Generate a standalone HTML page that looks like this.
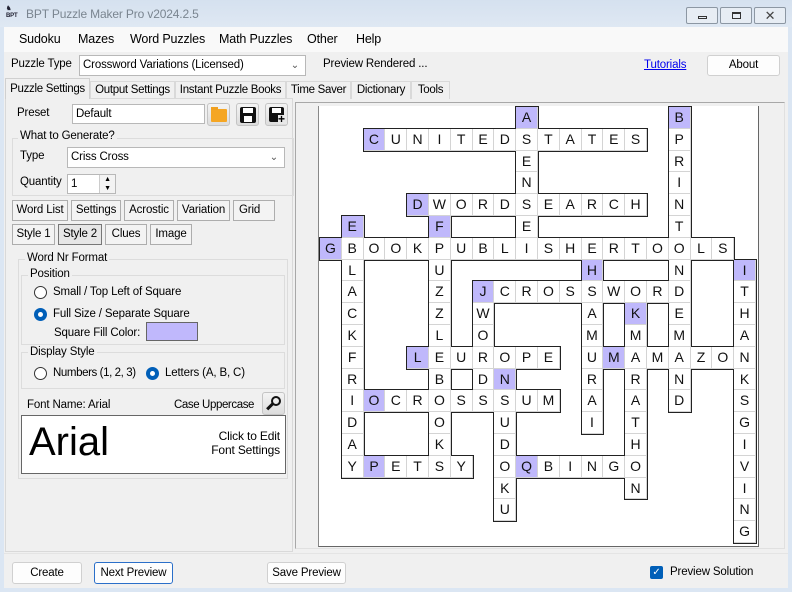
<!DOCTYPE html>
<html><head><meta charset="utf-8">
<style>
*{box-sizing:border-box;margin:0;padding:0}
body{width:792px;height:592px;overflow:hidden;background:#dbe6f3;font-family:"Liberation Sans",Arial,sans-serif;font-size:11.5px;letter-spacing:-0.15px;color:#000;position:relative}
.a{position:absolute;white-space:nowrap}
.win{position:absolute;left:4px;top:27px;width:784px;height:561px;background:#f0f0f0}
.menu{position:absolute;left:4px;top:27px;width:784px;height:25px;background:#f9f9f9}
.btn{position:absolute;background:#fdfdfd;border:1px solid #d0d0d0;border-radius:3px;text-align:center}
.wb{position:absolute;background:#f3f3f3;border:1px solid #adadad;text-align:center;line-height:19px}
.tab{position:absolute;top:81px;height:18px;border:1px solid #d9d9d9;border-bottom:none;background:#f0f0f0;line-height:17px;text-align:center;overflow:hidden;white-space:nowrap;letter-spacing:-0.3px}
.grp{position:absolute;border:1px solid #dcdcdc}
.gl{position:absolute;background:#f0f0f0;padding:0 2px;white-space:nowrap}
.radio{position:absolute;width:13px;height:13px;border-radius:50%;border:1px solid #333;background:#fff}
.radio.on{border-color:#005fb8;background:#005fb8}
.radio.on::after{content:'';position:absolute;left:3px;top:3px;width:5px;height:5px;border-radius:50%;background:#fff}
.inp{position:absolute;background:#fff;border:1px solid #b8b8b8;padding-left:3px;white-space:nowrap}
#g{position:absolute;left:0;top:0;z-index:0}
.c{position:absolute;left:calc(320px + var(--c)*21.8px);top:calc(107px + var(--r)*21.8px);width:21.8px;height:21.8px;background:#fff;border-right:1px solid #d4d4d4;border-bottom:1px solid #d4d4d4;font:14px "Liberation Sans",Arial,sans-serif;line-height:21px;text-align:center;color:#111;letter-spacing:0}
.c::before{content:'';position:absolute;left:-1px;top:-1px;right:-2px;bottom:-2px;background:#222;z-index:-1}
.h{background:#bfb8fb}
.ic{position:absolute;width:23px;height:23px;border:1px solid #c4c4c4;border-radius:3px;background:linear-gradient(#f4f4f4,#dcdcdc)}
</style></head><body>
<div class="a" style="left:0;top:0;width:792px;height:27px;background:linear-gradient(#d5e1ef,#dfe8f3)"></div>
<div class="a" style="left:6px;top:6px;width:14px;height:14px;font-size:6px;font-weight:bold;line-height:7px;color:#223">&#9822;<br>BPT</div>
<div class="a" style="left:26px;top:7px;font-size:12px;color:#7a8590">BPT Puzzle Maker Pro v2024.2.5</div>
<div class="a" style="left:686px;top:7px;width:32px;height:17px;border:1px solid #8c97a3;border-radius:2px;background:#e7edf4"><div style="position:absolute;left:11px;top:8px;width:9px;height:3px;border:1px solid #333"></div></div>
<div class="a" style="left:720px;top:7px;width:32px;height:17px;border:1px solid #8c97a3;border-radius:2px;background:#e7edf4"><div style="position:absolute;left:11px;top:4px;width:9px;height:7px;border:1px solid #333;border-top-width:2px"></div></div>
<div class="a" style="left:754px;top:7px;width:32px;height:17px;border:1px solid #8c97a3;border-radius:2px;background:#e7edf4;text-align:center;font-size:13px;line-height:15px;color:#444">&#x2715;</div>
<div class="win"></div>
<div class="menu"></div>
<div class="a" style="left:19px;top:32px;font-size:12.5px">Sudoku</div>
<div class="a" style="left:78px;top:32px;font-size:12.5px">Mazes</div>
<div class="a" style="left:130px;top:32px;font-size:12.5px">Word Puzzles</div>
<div class="a" style="left:219px;top:32px;font-size:12.5px">Math Puzzles</div>
<div class="a" style="left:307px;top:32px;font-size:12.5px">Other</div>
<div class="a" style="left:356px;top:32px;font-size:12.5px">Help</div>
<div class="a" style="left:11px;top:58px">Puzzle Type</div>
<div class="inp" style="left:79px;top:55px;width:227px;height:21px;line-height:19px">Crossword Variations (Licensed)<span style="position:absolute;right:6px;top:0;color:#555;font-size:10px">&#8964;</span></div>
<div class="a" style="left:323px;top:58px">Preview Rendered ...</div>
<div class="a" style="left:644px;top:59px;color:#0000ee;text-decoration:underline">Tutorials</div>
<div class="btn" style="left:707px;top:55px;width:73px;height:21px;line-height:19px">About</div>
<div class="tab" style="left:90px;width:85px">Output Settings</div>
<div class="tab" style="left:175px;width:111px">Instant Puzzle Books</div>
<div class="tab" style="left:286px;width:65px">Time Saver</div>
<div class="tab" style="left:351px;width:60px">Dictionary</div>
<div class="tab" style="left:411px;width:39px">Tools</div>
<div class="a" style="left:5px;top:98px;width:288px;height:454px;border:1px solid #d9d9d9;background:#f0f0f0"></div>
<div class="tab" style="left:5px;top:78px;width:85px;height:21px;background:#f0f0f0;border-color:#d0d0d0;line-height:20px">Puzzle Settings</div>
<div class="a" style="left:17px;top:107px">Preset</div>
<div class="inp" style="left:72px;top:104px;width:133px;height:20px;line-height:18px">Default</div>
<div class="ic" style="left:207px;top:103px"><div style="position:absolute;left:3px;top:5px;width:16px;height:13px;background:#f5a623;border-radius:1px"></div><div style="position:absolute;left:3px;top:3px;width:7px;height:3px;background:#f0a020"></div></div>
<div class="ic" style="left:236px;top:103px"><div style="position:absolute;left:3px;top:3px;width:16px;height:16px;background:#111;border-radius:2px"></div><div style="position:absolute;left:6px;top:4px;width:10px;height:5px;background:#fff"></div><div style="position:absolute;left:7px;top:12px;width:8px;height:6px;background:#fff"></div></div>
<div class="ic" style="left:265px;top:103px"><div style="position:absolute;left:3px;top:3px;width:15px;height:15px;background:#111;border-radius:2px"></div><div style="position:absolute;left:6px;top:4px;width:9px;height:5px;background:#fff"></div><div style="position:absolute;left:12px;top:11px;width:9px;height:9px;background:#e8e8e8"></div><div class="a" style="left:12px;top:8px;font-size:12px;font-weight:bold">+</div></div>
<div class="grp" style="left:12px;top:138px;width:282px;height:58px"></div>
<div class="gl" style="left:18px;top:130px">What to Generate?</div>
<div class="a" style="left:20px;top:150px">Type</div>
<div class="inp" style="left:67px;top:147px;width:218px;height:21px;line-height:19px">Criss Cross<span style="position:absolute;right:6px;top:0;color:#555;font-size:10px">&#8964;</span></div>
<div class="a" style="left:20px;top:176px">Quantity</div>
<div class="inp" style="left:67px;top:174px;width:49px;height:20px;line-height:18px">1<div style="position:absolute;right:0;top:0;width:16px;height:18px;border-left:1px solid #ccc;font-size:7px;line-height:9px;text-align:center;background:#f3f3f3">&#9650;<br>&#9660;</div></div>
<div class="wb" style="left:12px;top:200px;width:56px;height:21px">Word List</div>
<div class="wb" style="left:71px;top:200px;width:50px;height:21px">Settings</div>
<div class="wb" style="left:124px;top:200px;width:50px;height:21px">Acrostic</div>
<div class="wb" style="left:177px;top:200px;width:53px;height:21px">Variation</div>
<div class="wb" style="left:233px;top:200px;width:42px;height:21px;text-align:left;padding-left:5px">Grid</div>
<div class="wb" style="left:12px;top:224px;width:43px;height:21px">Style 1</div>
<div class="wb" style="left:58px;top:224px;width:44px;height:21px;background:#e6e6e6;border-color:#777">Style 2</div>
<div class="wb" style="left:105px;top:224px;width:42px;height:21px">Clues</div>
<div class="wb" style="left:150px;top:224px;width:42px;height:21px">Image</div>
<div class="grp" style="left:18px;top:259px;width:270px;height:220px"></div>
<div class="gl" style="left:25px;top:252px">Word Nr Format</div>
<div class="grp" style="left:21px;top:275px;width:264px;height:70px"></div>
<div class="gl" style="left:28px;top:268px">Position</div>
<div class="radio" style="left:34px;top:286px"></div>
<div class="a" style="left:53px;top:286px">Small / Top Left of Square</div>
<div class="radio on" style="left:34px;top:308px"></div>
<div class="a" style="left:53px;top:308px">Full Size / Separate Square</div>
<div class="a" style="left:54px;top:327px">Square Fill Color:</div>
<div class="a" style="left:146px;top:322px;width:52px;height:19px;background:#c0b8fc;border:1px solid #666"></div>
<div class="grp" style="left:21px;top:352px;width:264px;height:37px"></div>
<div class="gl" style="left:28px;top:346px">Display Style</div>
<div class="radio" style="left:34px;top:367px"></div>
<div class="a" style="left:53px;top:367px;letter-spacing:-0.4px">Numbers (1, 2, 3)</div>
<div class="radio on" style="left:146px;top:367px"></div>
<div class="a" style="left:165px;top:367px">Letters (A, B, C)</div>
<div class="a" style="left:27px;top:399px">Font Name: Arial</div>
<div class="a" style="left:174px;top:399px;letter-spacing:-0.4px">Case Uppercase</div>
<div class="ic" style="left:262px;top:392px;width:23px;height:23px"><div style="position:absolute;left:8px;top:3px;width:10px;height:10px;border:2px solid #111;border-radius:50%"></div><div style="position:absolute;left:3px;top:12px;width:8px;height:3px;background:#111;transform:rotate(-45deg)"></div></div>
<div class="a" style="left:21px;top:415px;width:265px;height:59px;background:#fff;border:1px solid #666"></div>
<div class="a" style="left:29px;top:417px;font-size:40px;line-height:50px;letter-spacing:0">Arial</div>
<div class="a" style="right:512px;top:429px;font-size:12px;text-align:right;line-height:14px">Click to Edit<br>Font Settings</div>
<div class="a" style="left:295px;top:102px;width:490px;height:447px;background:#f0f0f0;border:1px solid #a8a8a8;border-right-color:#e0e0e0;border-bottom-color:#e0e0e0"></div>
<div class="a" style="left:318px;top:106px;width:441px;height:441px;background:#fff;border:1px solid #666;border-top:none;border-left:1px solid #888"></div>
<div id="g">
<div class="c h" style="--c:9;--r:0">A</div><div class="c h" style="--c:16;--r:0">B</div>
<div class="c h" style="--c:2;--r:1">C</div><div class="c" style="--c:3;--r:1">U</div><div class="c" style="--c:4;--r:1">N</div><div class="c" style="--c:5;--r:1">I</div><div class="c" style="--c:6;--r:1">T</div><div class="c" style="--c:7;--r:1">E</div><div class="c" style="--c:8;--r:1">D</div><div class="c" style="--c:9;--r:1">S</div><div class="c" style="--c:10;--r:1">T</div><div class="c" style="--c:11;--r:1">A</div><div class="c" style="--c:12;--r:1">T</div><div class="c" style="--c:13;--r:1">E</div><div class="c" style="--c:14;--r:1">S</div><div class="c" style="--c:16;--r:1">P</div>
<div class="c" style="--c:9;--r:2">E</div><div class="c" style="--c:16;--r:2">R</div>
<div class="c" style="--c:9;--r:3">N</div><div class="c" style="--c:16;--r:3">I</div>
<div class="c h" style="--c:4;--r:4">D</div><div class="c" style="--c:5;--r:4">W</div><div class="c" style="--c:6;--r:4">O</div><div class="c" style="--c:7;--r:4">R</div><div class="c" style="--c:8;--r:4">D</div><div class="c" style="--c:9;--r:4">S</div><div class="c" style="--c:10;--r:4">E</div><div class="c" style="--c:11;--r:4">A</div><div class="c" style="--c:12;--r:4">R</div><div class="c" style="--c:13;--r:4">C</div><div class="c" style="--c:14;--r:4">H</div><div class="c" style="--c:16;--r:4">N</div>
<div class="c h" style="--c:1;--r:5">E</div><div class="c h" style="--c:5;--r:5">F</div><div class="c" style="--c:9;--r:5">E</div><div class="c" style="--c:16;--r:5">T</div>
<div class="c h" style="--c:0;--r:6">G</div><div class="c" style="--c:1;--r:6">B</div><div class="c" style="--c:2;--r:6">O</div><div class="c" style="--c:3;--r:6">O</div><div class="c" style="--c:4;--r:6">K</div><div class="c" style="--c:5;--r:6">P</div><div class="c" style="--c:6;--r:6">U</div><div class="c" style="--c:7;--r:6">B</div><div class="c" style="--c:8;--r:6">L</div><div class="c" style="--c:9;--r:6">I</div><div class="c" style="--c:10;--r:6">S</div><div class="c" style="--c:11;--r:6">H</div><div class="c" style="--c:12;--r:6">E</div><div class="c" style="--c:13;--r:6">R</div><div class="c" style="--c:14;--r:6">T</div><div class="c" style="--c:15;--r:6">O</div><div class="c" style="--c:16;--r:6">O</div><div class="c" style="--c:17;--r:6">L</div><div class="c" style="--c:18;--r:6">S</div>
<div class="c" style="--c:1;--r:7">L</div><div class="c" style="--c:5;--r:7">U</div><div class="c h" style="--c:12;--r:7">H</div><div class="c" style="--c:16;--r:7">N</div><div class="c h" style="--c:19;--r:7">I</div>
<div class="c" style="--c:1;--r:8">A</div><div class="c" style="--c:5;--r:8">Z</div><div class="c h" style="--c:7;--r:8">J</div><div class="c" style="--c:8;--r:8">C</div><div class="c" style="--c:9;--r:8">R</div><div class="c" style="--c:10;--r:8">O</div><div class="c" style="--c:11;--r:8">S</div><div class="c" style="--c:12;--r:8">S</div><div class="c" style="--c:13;--r:8">W</div><div class="c" style="--c:14;--r:8">O</div><div class="c" style="--c:15;--r:8">R</div><div class="c" style="--c:16;--r:8">D</div><div class="c" style="--c:19;--r:8">T</div>
<div class="c" style="--c:1;--r:9">C</div><div class="c" style="--c:5;--r:9">Z</div><div class="c" style="--c:7;--r:9">W</div><div class="c" style="--c:12;--r:9">A</div><div class="c h" style="--c:14;--r:9">K</div><div class="c" style="--c:16;--r:9">E</div><div class="c" style="--c:19;--r:9">H</div>
<div class="c" style="--c:1;--r:10">K</div><div class="c" style="--c:5;--r:10">L</div><div class="c" style="--c:7;--r:10">O</div><div class="c" style="--c:12;--r:10">M</div><div class="c" style="--c:14;--r:10">M</div><div class="c" style="--c:16;--r:10">M</div><div class="c" style="--c:19;--r:10">A</div>
<div class="c" style="--c:1;--r:11">F</div><div class="c h" style="--c:4;--r:11">L</div><div class="c" style="--c:5;--r:11">E</div><div class="c" style="--c:6;--r:11">U</div><div class="c" style="--c:7;--r:11">R</div><div class="c" style="--c:8;--r:11">O</div><div class="c" style="--c:9;--r:11">P</div><div class="c" style="--c:10;--r:11">E</div><div class="c" style="--c:12;--r:11">U</div><div class="c h" style="--c:13;--r:11">M</div><div class="c" style="--c:14;--r:11">A</div><div class="c" style="--c:15;--r:11">M</div><div class="c" style="--c:16;--r:11">A</div><div class="c" style="--c:17;--r:11">Z</div><div class="c" style="--c:18;--r:11">O</div><div class="c" style="--c:19;--r:11">N</div>
<div class="c" style="--c:1;--r:12">R</div><div class="c" style="--c:5;--r:12">B</div><div class="c" style="--c:7;--r:12">D</div><div class="c h" style="--c:8;--r:12">N</div><div class="c" style="--c:12;--r:12">R</div><div class="c" style="--c:14;--r:12">R</div><div class="c" style="--c:16;--r:12">N</div><div class="c" style="--c:19;--r:12">K</div>
<div class="c" style="--c:1;--r:13">I</div><div class="c h" style="--c:2;--r:13">O</div><div class="c" style="--c:3;--r:13">C</div><div class="c" style="--c:4;--r:13">R</div><div class="c" style="--c:5;--r:13">O</div><div class="c" style="--c:6;--r:13">S</div><div class="c" style="--c:7;--r:13">S</div><div class="c" style="--c:8;--r:13">S</div><div class="c" style="--c:9;--r:13">U</div><div class="c" style="--c:10;--r:13">M</div><div class="c" style="--c:12;--r:13">A</div><div class="c" style="--c:14;--r:13">A</div><div class="c" style="--c:16;--r:13">D</div><div class="c" style="--c:19;--r:13">S</div>
<div class="c" style="--c:1;--r:14">D</div><div class="c" style="--c:5;--r:14">O</div><div class="c" style="--c:8;--r:14">U</div><div class="c" style="--c:12;--r:14">I</div><div class="c" style="--c:14;--r:14">T</div><div class="c" style="--c:19;--r:14">G</div>
<div class="c" style="--c:1;--r:15">A</div><div class="c" style="--c:5;--r:15">K</div><div class="c" style="--c:8;--r:15">D</div><div class="c" style="--c:14;--r:15">H</div><div class="c" style="--c:19;--r:15">I</div>
<div class="c" style="--c:1;--r:16">Y</div><div class="c h" style="--c:2;--r:16">P</div><div class="c" style="--c:3;--r:16">E</div><div class="c" style="--c:4;--r:16">T</div><div class="c" style="--c:5;--r:16">S</div><div class="c" style="--c:6;--r:16">Y</div><div class="c" style="--c:8;--r:16">O</div><div class="c h" style="--c:9;--r:16">Q</div><div class="c" style="--c:10;--r:16">B</div><div class="c" style="--c:11;--r:16">I</div><div class="c" style="--c:12;--r:16">N</div><div class="c" style="--c:13;--r:16">G</div><div class="c" style="--c:14;--r:16">O</div><div class="c" style="--c:19;--r:16">V</div>
<div class="c" style="--c:8;--r:17">K</div><div class="c" style="--c:14;--r:17">N</div><div class="c" style="--c:19;--r:17">I</div>
<div class="c" style="--c:8;--r:18">U</div><div class="c" style="--c:19;--r:18">N</div>
<div class="c" style="--c:19;--r:19">G</div>
</div>
<div class="a" style="left:4px;top:553px;width:784px;height:1px;background:#e4e4e4"></div>
<div class="btn" style="left:12px;top:562px;width:70px;height:22px;line-height:20px">Create</div>
<div class="btn" style="left:94px;top:562px;width:79px;height:22px;line-height:20px;border-color:#2a6fc9">Next Preview</div>
<div class="btn" style="left:267px;top:562px;width:79px;height:22px;line-height:20px">Save Preview</div>
<div class="a" style="left:650px;top:566px;width:13px;height:13px;background:#005fb8;border-radius:2px;color:#fff;font-size:10px;line-height:13px;text-align:center">&#10003;</div>
<div class="a" style="left:670px;top:566px">Preview Solution</div>
</body></html>
